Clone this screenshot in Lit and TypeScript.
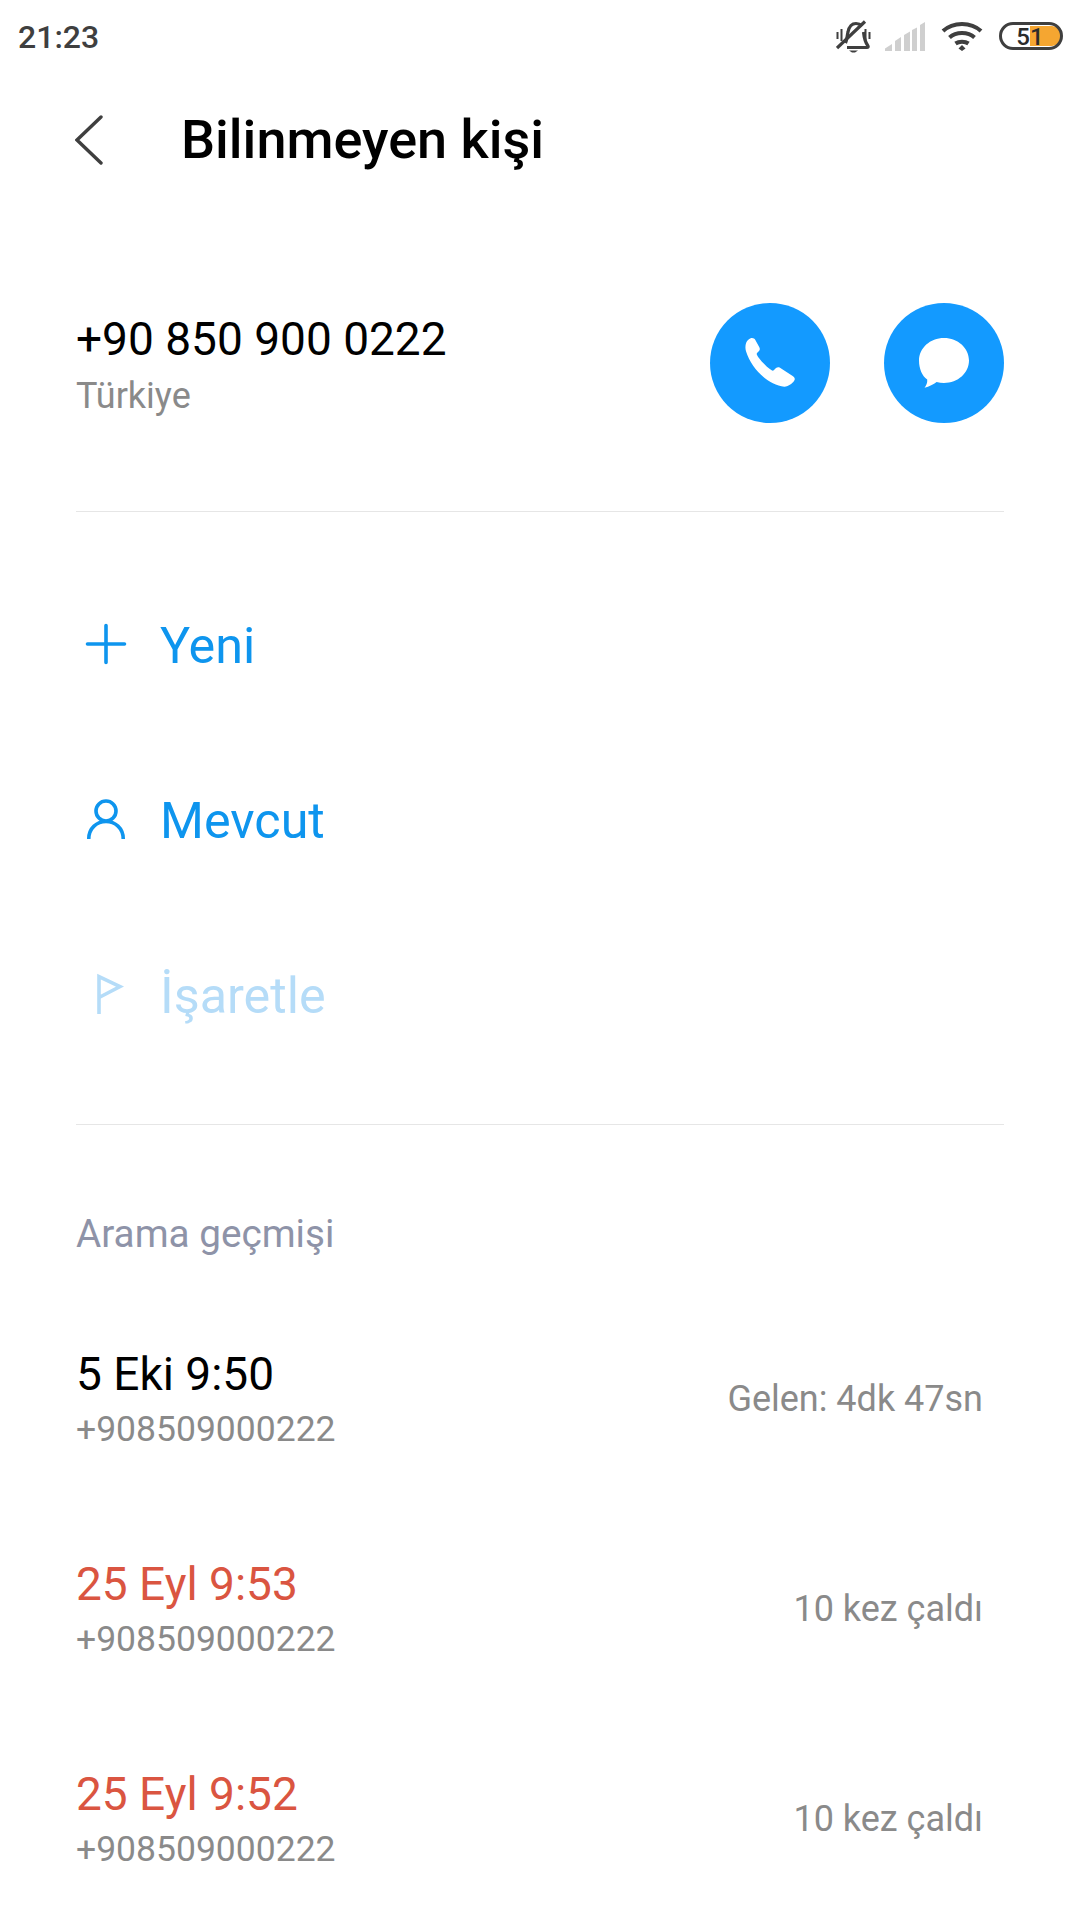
import {LitElement, css, html, svg} from 'lit';
import {customElement} from 'lit/decorators.js';

const calls = [
  {when: '5 Eki 9:50', num: '+908509000222', note: 'Gelen: 4dk 47sn', missed: false},
  {when: '25 Eyl 9:53', num: '+908509000222', note: '10 kez çaldı', missed: true},
  {when: '25 Eyl 9:52', num: '+908509000222', note: '10 kez çaldı', missed: true},
];

const actions = [
  {
    label: 'Yeni',
    off: false,
    icon: svg`<path d="M21 2.500v37M2.500 21h37" fill="none" stroke="currentColor" stroke-width="3.600" stroke-linecap="round"/>`,
  },
  {
    label: 'Mevcut',
    off: false,
    icon: svg`<circle cx="21" cy="13" r="10" fill="none" stroke="currentColor" stroke-width="3.600"/><path d="M3.750 41C3.750 30 12 23.500 21 23.500S38.250 30 38.250 41" fill="none" stroke="currentColor" stroke-width="3.600"/>`,
  },
  {
    label: 'İşaretle',
    off: true,
    icon: svg`<path d="M14 41V3.500L35 13.500 15 24" fill="none" stroke="currentColor" stroke-width="3.600"/>`,
  },
];

@customElement('app-root')
export class AppRoot extends LitElement {
  static styles = css`
    :host {
      display: block;
      box-sizing: border-box;
      inline-size: 1080px;
      block-size: 1920px;
      overflow: hidden;
      background: #fff;
      font-family: Roboto, sans-serif;
      color: #000;
    }

    * {
      box-sizing: border-box;
    }

    .status {
      display: flex;
      align-items: center;
      justify-content: space-between;
      block-size: 74px;
      padding: 0 17px 0 18px;
    }

    .time {
      font-size: 32px;
      font-weight: 500;
      color: #3f3f3f;
    }

    .status-icons {
      display: flex;
      align-items: center;
      gap: 16px;
      padding-block-end: 2px;
    }

    .status-icons svg {
      display: block;
    }

    .bell {
      margin-inline-end: -3px;
    }

    .bar {
      display: flex;
      align-items: center;
      block-size: 131px;
      padding-inline-start: 75px;
    }

    .back {
      display: block;
      inline-size: 106px;
    }

    .title {
      margin: 0;
      font-size: 54px;
      font-weight: 500;
    }

    .contact {
      display: flex;
      justify-content: space-between;
      align-items: center;
      margin: 98px 76px 0 76px;
      block-size: 120px;
    }

    .who {
      padding-block-start: 3px;
    }

    .phone {
      font-size: 46px;
      line-height: 54px;
      margin-block-end: 9px;
    }

    .country {
      font-size: 36px;
      line-height: 42px;
      color: #8a8a8a;
    }

    .buttons {
      display: flex;
      gap: 54px;
    }

    .round {
      display: flex;
      align-items: center;
      justify-content: center;
      inline-size: 120px;
      block-size: 120px;
      border-radius: 50%;
      background: #139aff;
    }

    .round svg {
      display: block;
      inline-size: 50px;
      block-size: 50px;
    }

    .rule {
      block-size: 1px;
      margin: 0 76px;
      background: #e6e6e6;
    }

    .contact + .rule {
      margin-block-start: 88px;
    }

    .actions {
      padding: 46px 0 41px;
    }

    .action {
      display: flex;
      align-items: center;
      block-size: 175px;
      padding-inline-start: 85px;
      font-size: 50.300px;
      color: #0e95ee;
    }

    .action.off {
      color: #b5dcf8;
    }

    .action svg {
      display: block;
      inline-size: 42px;
      block-size: 42px;
      margin-block-end: 4px;
      margin-inline-end: 33px;
    }

    .history {
      margin: 84px 0 0 76px;
      font-size: 38.700px;
      line-height: 49px;
      color: #8e93a8;
    }

    .calls {
      padding-block-start: 37px;
    }

    .call {
      display: flex;
      align-items: center;
      justify-content: space-between;
      block-size: 210px;
      padding: 0 22px 0 76px;
    }

    .when {
      font-size: 46px;
      line-height: 58px;
    }

    .when.missed {
      color: #da5541;
    }

    .num {
      font-size: 35.500px;
      line-height: 52px;
      color: #8a8a8a;
    }

    .note {
      margin-inline-end: 75px;
      margin-block-end: 3px;
      font-size: 36px;
      color: #8a8a8a;
    }
  `;

  render() {
    return html`
      <div class="status">
        <span class="time">21:23</span>
        <div class="status-icons">
          <svg class="bell" width="36" height="33" viewBox="0 0 36 33" fill="none" stroke="#3f3f3f" stroke-width="3.200">
            <path d="M9.500 23c1.500-3 1.500-7 2.500-11C13 7 16 3.500 20 3.500c2.500 0 4.500 1 6 2.500M27.500 12c.5 5 1.500 10 4.500 14 .5 1 0 1.500-1 1.500H11"/>
            <path d="M1 28L29 1.500"/>
            <path d="M13 30.500h9l-3 2h-3z" fill="#3f3f3f" stroke="none"/>
            <path d="M1.500 12v7M5.500 9v12M29.500 9v11M33.500 12v7" stroke-width="2"/>
          </svg>
          <svg width="40" height="29" viewBox="0 0 40 29" fill="#cfcfcf">
            <path d="M0 29v-2.500L7 22v7zM10 29V19l6-4v14zM19 29V13l6-3.500V29zM27 29V8l5-2.500V29zM35 29V3l5-3v29z"/>
          </svg>
          <svg width="42" height="30" viewBox="0 0 42 30" fill="none" stroke="#3f3f3f" stroke-width="4">
            <path d="M2 10C12 .500 30 .500 40 10M8.500 16.500C15 10.500 27 10.500 33.500 16.500M14.500 22.500C18 20 24 20 27.500 22.500"/>
            <path d="M21 24l3.500 3.500L21 30l-3.500-2.500z" fill="#3f3f3f" stroke="none"/>
          </svg>
          <svg width="64" height="28" viewBox="0 0 64 28">
            <path d="M31 4h22a10 10 0 0 1 0 20H31z" fill="#f5a631"/>
            <rect x="1.500" y="1.500" width="61" height="25" rx="12.500" fill="none" stroke="#3f3f3f" stroke-width="3"/>
            <text x="31" y="22.500" text-anchor="middle" font-family="Roboto" font-size="24" font-weight="500" fill="#2b2b2b">51</text>
          </svg>
        </div>
      </div>

      <div class="bar">
        <svg class="back" width="106" height="50" viewBox="0 0 106 50" fill="none" stroke="#3f3f3f" stroke-width="3.400" stroke-linecap="round">
          <path d="M26 2L2 25l24 23"/>
        </svg>
        <h1 class="title">Bilinmeyen kişi</h1>
      </div>

      <div class="contact">
        <div class="who">
          <div class="phone">+90 850 900 0222</div>
          <div class="country">Türkiye</div>
        </div>
        <div class="buttons">
          <div class="round">
            <svg viewBox="0 0 150 150" fill="#fff">
              <path d="M10 5C18-2 27-1 31 6l12 22c3 6 1 10-3 13l-4 4c-1 2-1 4 0 6 6 12 26 34 44 46 3 2 5 1 7-1l6-6c4-3 8-3 12-1l38 25c7 5 8 10 4 15-5 7-15 16-29 17C72 142 20 95 3 40-1 26 2 11 10 5z"/>
            </svg>
          </div>
          <div class="round">
            <svg viewBox="0 0 149 149" fill="#fff">
              <path d="M74.500 0C116 0 149 30 149 67s-33 67-74.500 67c-8 0-15-1-22-3-9 7-22 14-36 17 5-6 9-14 8-24C9 113 0 91 0 67 0 30 33 0 74.500 0z"/>
            </svg>
          </div>
        </div>
      </div>
      <div class="rule"></div>

      <div class="actions">
        ${actions.map(a => html`
          <div class="action ${a.off ? 'off' : ''}">
            <svg viewBox="0 0 42 42">${a.icon}</svg>
            <span>${a.label}</span>
          </div>
        `)}
      </div>
      <div class="rule"></div>

      <div class="history">Arama geçmişi</div>
      <div class="calls">
        ${calls.map(c => html`
          <div class="call">
            <div>
              <div class="when ${c.missed ? 'missed' : ''}">${c.when}</div>
              <div class="num">${c.num}</div>
            </div>
            <span class="note">${c.note}</span>
          </div>
        `)}
      </div>
    `;
  }
}
